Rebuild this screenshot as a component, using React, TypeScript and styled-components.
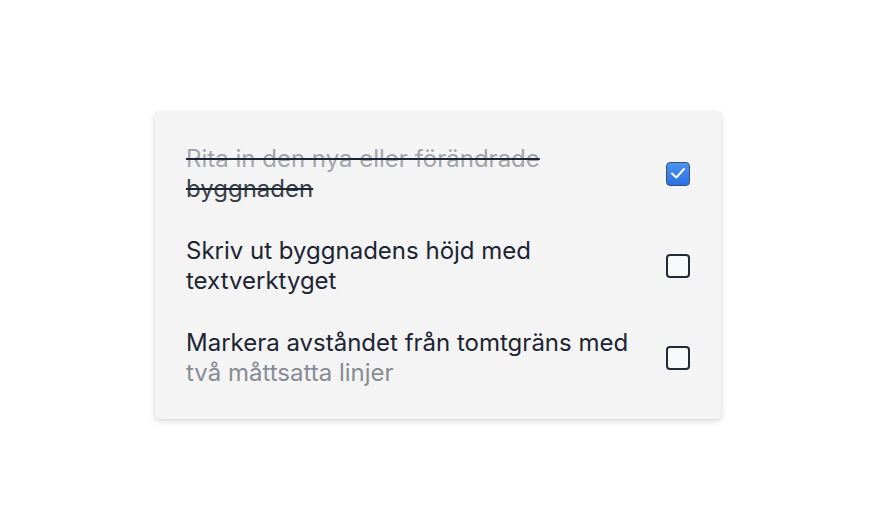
import React from "react";
import styled, { createGlobalStyle } from "styled-components";

const Global = createGlobalStyle`
  html, body { margin: 0; padding: 0; background: #ffffff; }
  body { font-family: Inter, "Noto Sans", sans-serif; }
`;

const Page = styled.div`
  height: 530px;
  display: flex;
  align-items: center;
  justify-content: center;
`;

const Card = styled.div`
  width: 566px;
  box-sizing: border-box;
  background: #f4f4f5;
  border-radius: 4px;
  box-shadow: 0 2px 6px rgba(0, 0, 0, 0.16), 0 0 1px rgba(0, 0, 0, 0.12);
  padding: 32px 31px 31px 31px;
  display: flex;
  flex-direction: column;
  gap: 32px;
`;

const Row = styled.label`
  display: flex;
  align-items: center;
  justify-content: space-between;
  gap: 24px;
`;

const Text = styled.div<{ $done?: boolean }>`
  width: 466px;
  font-size: 24px;
  line-height: 30px;
  color: #1d2433;
  text-decoration: ${(p) => (p.$done ? "line-through" : "none")};
  text-decoration-thickness: 1.5px;
`;

const Part = styled.span<{ $faded?: boolean }>`
  color: ${(p) => (p.$faded ? "#a2a5aa" : "#3a3f47")};
`;

const Dim = styled.span`
  color: #878c94;
`;

const Box = styled.span<{ $checked?: boolean }>`
  width: 24px;
  height: 24px;
  box-sizing: border-box;
  flex: none;
  border-radius: 4px;
  display: flex;
  align-items: center;
  justify-content: center;
  border: ${(p) => (p.$checked ? "1.5px solid #3a5078" : "2px solid #222a38")};
  background: ${(p) =>
    p.$checked ? "linear-gradient(#4b93f3, #2d6fe4)" : "#f8f9fa"};
`;

const Check = () => (
  <svg width="16" height="13" viewBox="0 0 16 13">
    <path
      d="M2 6.5 L6.3 10.5 L14 2"
      fill="none"
      stroke="#ffffff"
      strokeWidth="2"
      strokeLinecap="round"
      strokeLinejoin="round"
    />
  </svg>
);

export default function App() {
  return (
    <>
      <Global />
      <Page>
        <Card>
          <Row>
            <Text $done>
              <Part $faded>Rita in den nya eller förändrade</Part>{" "}
              <Part>byggnaden</Part>
            </Text>
            <Box $checked>
              <Check />
            </Box>
          </Row>
          <Row>
            <Text>Skriv ut byggnadens höjd med textverktyget</Text>
            <Box />
          </Row>
          <Row>
            <Text>
              Markera avståndet från tomtgräns med <Dim>två måttsatta linjer</Dim>
            </Text>
            <Box />
          </Row>
        </Card>
      </Page>
    </>
  );
}
